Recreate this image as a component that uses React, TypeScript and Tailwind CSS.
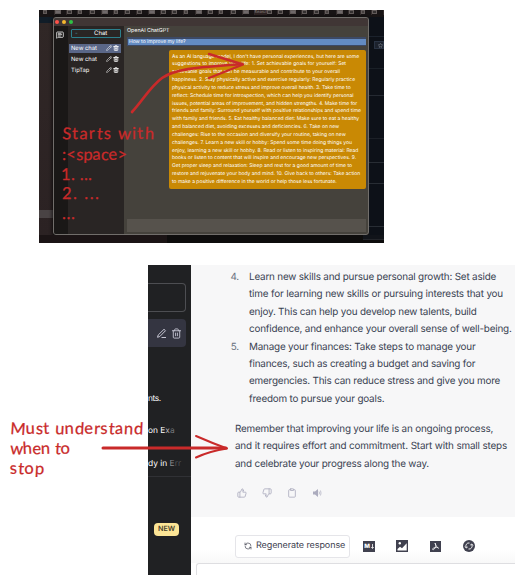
import { Pencil, Trash2, ThumbsUp, ThumbsDown, Clipboard, RefreshCw, MessageSquareText, Star } from "lucide-react";

type Line = [string, number];

const answer: Line[] = [
  ["As an AI language model, I don't have personal experiences, but here are some", 187],
  ["suggestions to improve your life: 1. Set achievable goals for yourself: Set", 174],
  ["achievable goals that can be measurable and contribute to your overall", 168],
  ["happiness. 2. Stay physically active and exercise regularly: Regularly practice", 182],
  ["physical activity to reduce stress and improve overall health. 3. Take time to", 178],
  ["reflect: Schedule time for introspection, which can help you identify personal", 181],
  ["issues, potential areas of improvement, and hidden strengths. 4. Make time for", 185],
  ["friends and family: Surround yourself with positive relationships and spend time", 189],
  ["with family and friends. 5. Eat healthy balanced diet: Make sure to eat a healthy", 187],
  ["and balanced diet, avoiding excesses and deficiencies. 6. Take on new", 166],
  ["challenges: Rise to the occasion and diversify your routine, taking on new", 173],
  ["challenges. 7. Learn a new skill or hobby: Spend some time doing things you", 180],
  ["enjoy, learning a new skill or hobby. 8. Read or listen to inspiring material: Read", 185],
  ["books or listen to content that will inspire and encourage new perspectives. 9.", 184],
  ["Get proper sleep and relaxation: Sleep and rest for a good amount of time to", 180],
  ["restore and rejuvenate your body and mind. 10. Give back to others: Take action", 188],
  ["to make a positive difference in the world or help those less fortunate.", 163],
];

const items: { n: string; lines: Line[] }[] = [
  {
    n: "4.",
    lines: [
      ["Learn new skills and pursue personal growth: Set aside", 247],
      ["time for learning new skills or pursuing interests that you", 254],
      ["enjoy. This can help you develop new talents, build", 227],
      ["confidence, and enhance your overall sense of well-being.", 261],
    ],
  },
  {
    n: "5.",
    lines: [
      ["Manage your finances: Take steps to manage your", 226],
      ["finances, such as creating a budget and saving for", 226],
      ["emergencies. This can reduce stress and give you more", 250],
      ["freedom to pursue your goals.", 135],
    ],
  },
];

const closing: Line[] = [
  ["Remember that improving your life is an ongoing process,", 258],
  ["and it requires effort and commitment. Start with small steps", 272],
  ["and celebrate your progress along the way.", 193],
];

function Lines({ lines }: { lines: Line[] }) {
  return (
    <>
      {lines.map(([text, width]) => (
        <div key={text} className="whitespace-nowrap [text-align-last:justify]" style={{ width }}>
          {text}
        </div>
      ))}
    </>
  );
}

function ChatRow({ label, active }: { label: string; active?: boolean }) {
  return (
    <div className={`ml-px flex h-[9px] w-[52px] items-center px-[2px] text-[5.8px] leading-[9px] text-white ${active ? "bg-[#5a6788]" : ""}`}>
      <span className="flex-1">{label}</span>
      <Pencil size={6} strokeWidth={2} className="mr-px" />
      <Trash2 size={6} strokeWidth={3} />
    </div>
  );
}

function DesktopShot() {
  return (
    <section className="ml-[39px] flex h-[233px] w-[345px] flex-col overflow-hidden bg-[#211d1e]">
      <div className="flex h-[7px] shrink-0 items-start bg-[#181415] pl-[4px] text-[#8a8382]">
        {Array.from({ length: 29 }, (_, i) =>
          i === 18 ? (
            <span key={i} className="h-[5px] w-[12px] bg-[#2e2323] text-[4px] leading-[4px]">Search</span>
          ) : (
            <span key={i} className="flex h-[5px] w-[12px] items-start border-r border-[#332c2c]">
              <i className={`block h-[4px] border border-[#625b5a] ${i % 4 === 1 ? "w-[6px] bg-[#6e6869]" : i % 3 === 0 ? "w-[4px] bg-[#46403f]" : "w-[5px] bg-[#343030]"}`} />
            </span>
          ),
        )}
      </div>
      <div className="flex h-[218px] shrink-0">
        <div className="flex w-[14px] flex-col bg-linear-to-b from-[#302726] to-[#2b2223]">
          <div className="h-[6px] bg-[#111d28]" />
          <div className="mt-[187px] h-[8px] bg-[#494344]" />
        </div>
        <div className="flex w-[316px] flex-col overflow-hidden rounded-[3px] border border-[#716e6b] bg-[#45423c] shadow-[0_1px_4px_#000]">
          <div className="flex h-[8px] shrink-0 items-center gap-[3px] bg-[#403635] pl-[1px]">
            <i className="size-[4px] rounded-full bg-[#ff5149]" />
            <i className="size-[4px] rounded-full bg-[#f5b82e]" />
            <i className="size-[4px] rounded-full bg-[#2fc344]" />
          </div>
          <div className="flex min-h-0 flex-1">
            <div className="w-[14px] bg-[#1a1817] pt-[5px] pl-[2px] text-white">
              <MessageSquareText size={8} strokeWidth={2.2} />
            </div>
            <div className="w-[56px] bg-[#292524] pt-[3px]">
              <div className="ml-[3px] flex h-[9px] w-[50px] items-center rounded-[1px] border border-[#2c7f8c] pl-[3px] text-[6px] text-white">
                <span className="w-[19px] text-[#49a1b0]">-</span>Chat
              </div>
              <div className="mt-[5.5px] flex flex-col gap-[2px]">
                <ChatRow label="New chat" active />
                <ChatRow label="New chat" />
                <ChatRow label="TipTap" />
              </div>
            </div>
            <div className="flex flex-1 flex-col text-white">
              <div className="h-[11px] pt-[1px] pl-[3px] text-[5.3px] leading-[8px]">OpenAI ChatGPT</div>
              <div className="ml-[3px] h-[9px] w-[239px] bg-[#3c4965] pt-[2px] pl-px">
                <div className="h-[6px] bg-[#638bc2] pl-px text-[5px] leading-[6px]">
                  How to improve my life?
                </div>
              </div>
              <div className="mt-[4px] ml-[45px] h-[139px] w-[197px] rounded-[2px] bg-[#c98904] pt-[3.5px] pl-[3px] text-[5px] leading-[7.85px]">
                <Lines lines={answer} />
              </div>
              <div className="mt-[30px] ml-[3px] h-[13px] w-[239px] bg-[#56524c]" />
            </div>
          </div>
        </div>
        <div className="flex flex-1 flex-col bg-[#0d1118]">
          <div className="h-[20px] border-b border-[#1b222c]" />
          <div className="mt-[4px] ml-[5px] flex h-[8px] items-center border border-[#293343] bg-[#1c222d] text-[#aeb7c2]">
            <Star size={5} className="ml-[3px]" />
          </div>
          <div className="h-[20px] border-b border-[#1a2027]" />
          <div className="h-[27px] border-b border-[#252a32]" />
          <div className="h-[43px] border-b border-[#1c2027]" />
          <div className="h-[24px] border-b border-[#282d34]" />
          <div className="h-[21px] border-b border-[#282d34]" />
          <div className="h-[43px] border-b border-[#282d34]" />
        </div>
      </div>
      <div className="flex flex-1 bg-[#0d0c0c]">
        <div className="w-[128px] bg-[#1b1415]" />
        <div className="flex-1" />
        <div className="h-[5px] w-[21px] border-b border-[#23252a] bg-[#11141a]" />
      </div>
    </section>
  );
}

function ConversationShot() {
  return (
    <section className="mt-[22px] ml-[148px] flex h-[310px] w-[367px] overflow-hidden">
      <aside className="flex w-[43px] shrink-0 flex-col overflow-hidden bg-[#202123] text-[8.4px] text-white">
        <div className="mt-[18px] mr-[5px] h-[29px] shrink-0 rounded-r-[4px] border border-l-0 border-[#4d4e52]" />
        <div className="mt-[7px] mr-[5px] flex h-[28px] shrink-0 items-center justify-end gap-[4px] rounded-r-[4px] bg-[#343541] pr-[4px] text-[#c5c5d2]">
          <svg width="11" height="11" viewBox="0 0 11 11" fill="none" stroke="currentColor" strokeWidth="1" strokeLinejoin="round">
            <path d="M1.5 9.3 2.2 7 8 1.3 9.5 2.7 3.8 8.5 1.5 9.3ZM5.5 9.5H10" />
          </svg>
          <Trash2 size={11} strokeWidth={2} />
        </div>
        <div className="mt-[44.5px] h-[32.5px] shrink-0 leading-[14px] tracking-[-0.4px]">nts.</div>
        <div className="h-[33px] shrink-0 whitespace-nowrap leading-[14px]">on E<span className="text-[#b0b0b5]">x</span><span className="text-[#75767a]">a</span></div>
        <div className="h-[20px] shrink-0 whitespace-nowrap border-b border-[#303135] leading-[14px]">dy in <span className="text-[#8a8b90]">E</span><span className="text-[#505156]">rr</span></div>
        <div className="mt-[46px] ml-[6px] flex h-[13px] w-[25px] shrink-0 items-center justify-center rounded-[4px] bg-[#fce596] text-[7.2px] font-semibold text-[#48412b]">NEW</div>
      </aside>
      <main className="flex w-[324px] flex-col bg-white">
        <article className="h-[252px] shrink-0 bg-[#f7f7f8] pt-[4px] text-[9.9px] leading-[17.4px] tracking-[-0.19px] text-[#374151]">
          {items.map((item) => (
            <div key={item.n} className="flex">
              <span className="mr-[10px] w-[48px] text-right text-[#6b7280]">{item.n}</span>
              <div><Lines lines={item.lines} /></div>
            </div>
          ))}
          <div className="mt-[12.5px] pl-[44px]"><Lines lines={closing} /></div>
          <div className="mt-[15px] flex gap-[15px] pl-[46px] text-[#acacbe]">
            <ThumbsUp size={10} strokeWidth={2} />
            <ThumbsDown size={10} strokeWidth={2} />
            <Clipboard size={10} strokeWidth={2} />
            <svg width="10" height="10" viewBox="0 0 10 10" fill="currentColor"><path d="M1 3.5H3L6 1V9L3 6.5H1Z" /><path d="M7 3.5Q8 5 7 6.5M8.5 2.5Q9.5 5 8.5 7.5" fill="none" stroke="currentColor" strokeWidth=".7" /></svg>
          </div>
        </article>
        <div className="flex h-[46px] shrink-0 items-center bg-linear-to-b from-white from-70% to-[#f8f8f8] pt-[13px] pb-[1px] pl-[44px] text-[#40414f]">
          <div className="flex h-[23px] w-[115px] shrink-0 items-center rounded-[3px] border border-[#e5e5e9] bg-white pl-[8px] text-[9px] tracking-[-0.08px]">
            <RefreshCw size={8} strokeWidth={2} className="mr-[4px] -scale-x-100" />
            <span className="w-[86px] whitespace-nowrap [text-align-last:justify]">Regenerate response</span>
          </div>
          <div className="ml-[13px] flex h-[11px] w-[12px] shrink-0 items-center justify-center bg-[#40414f] text-[6px] font-extrabold text-white">M<svg className="ml-px" width="3" height="5"><path d="M1.5 0V4M.3 3 1.5 4.5 2.7 3" stroke="white" strokeWidth=".8" fill="none" /></svg></div>
          <svg className="ml-[21px]" width="12" height="12"><path fill="#40414f" d="M0 0H12V12H0Z" /><path fill="white" d="M1.5 10.5V9L4 6.7 6 8.2 10.7 3.3V10.5Z" /><circle cx="3.8" cy="3.3" r="1.2" fill="white" /></svg>
          <svg className="ml-[22px]" width="11" height="11"><path fill="#40414f" d="M0 0H11V11H0Z" /><path d="M5 2C6 4 6 5 5 7S2.5 9 2.5 8 8 5.5 8.5 7 5.5 5 5 2Z" fill="none" stroke="white" strokeWidth=".8" /></svg>
          <svg className="ml-[22px]" width="12" height="12" fill="none" stroke="white"><circle cx="6" cy="6" r="6" fill="#40414f" stroke="none" /><path strokeWidth=".9" d="M3.3 7.5A3 3 0 0 1 6.5 3M8.7 4.5A3 3 0 0 1 5.5 9M2 6.5 3.2 8 4.7 7M10 5.5 8.8 4 7.3 5" /></svg>
        </div>
        <div className="ml-[5px] flex-1 rounded-tl-[3px] border-t border-l border-[#dedee1] bg-white" />
      </main>
    </section>
  );
}

function Annotations() {
  return (
    <svg className="pointer-events-none absolute inset-0" width="524" height="585" fill="none" stroke="#c92a2a" strokeLinecap="round" strokeLinejoin="round">
      <path d="M132 112C143 100 150 87 162 78 178 67 209 67 242 64" strokeWidth="2.7" />
      <path d="M209 54 243 64.5 209 78" strokeWidth="2.4" />
      <path d="M103 448H226" strokeWidth="3" />
      <path d="M196 436Q212 443 227 448.5 210 451 196 457.5" strokeWidth="2" />
      <g fill="#c92a2a" strokeWidth=".25" fontFamily="Lato, 'Open Sans', sans-serif" fontSize="16.5">
        <text x="62" y="139" rotate="4 0 3 -3 4 0 -3 3 0 -4 2" textLength="92" lengthAdjust="spacing">Starts with</text>
        <text x="62" y="160" rotate="0 0 4 2 -3 3 -2 0" textLength="65" lengthAdjust="spacing">:&lt;space&gt;</text>
        <text x="61" y="180" textLength="31" lengthAdjust="spacing">1. ...</text>
        <text x="62" y="199" textLength="37" lengthAdjust="spacing">2. ...</text>
        <text x="62" y="219" textLength="13" lengthAdjust="spacing">...</text>
        <text x="10" y="434" rotate="4 -2 3 -3 0 3 -2 3 -3 2 -2 4 -2 3 3" textLength="133" lengthAdjust="spacing">Must understand</text>
        <text x="10" y="454" rotate="3 -3 2 -2 0 4 -3" textLength="60" lengthAdjust="spacing">when to</text>
        <text x="10" y="474" rotate="-3 3 -2 3" textLength="34" lengthAdjust="spacing">stop</text>
      </g>
    </svg>
  );
}

export default function App() {
  return (
    <div className="relative h-[585px] w-[524px] overflow-hidden bg-white pt-[10px] font-['Inter',sans-serif] [text-rendering:geometricPrecision]">
      <DesktopShot />
      <ConversationShot />
      <Annotations />
    </div>
  );
}
